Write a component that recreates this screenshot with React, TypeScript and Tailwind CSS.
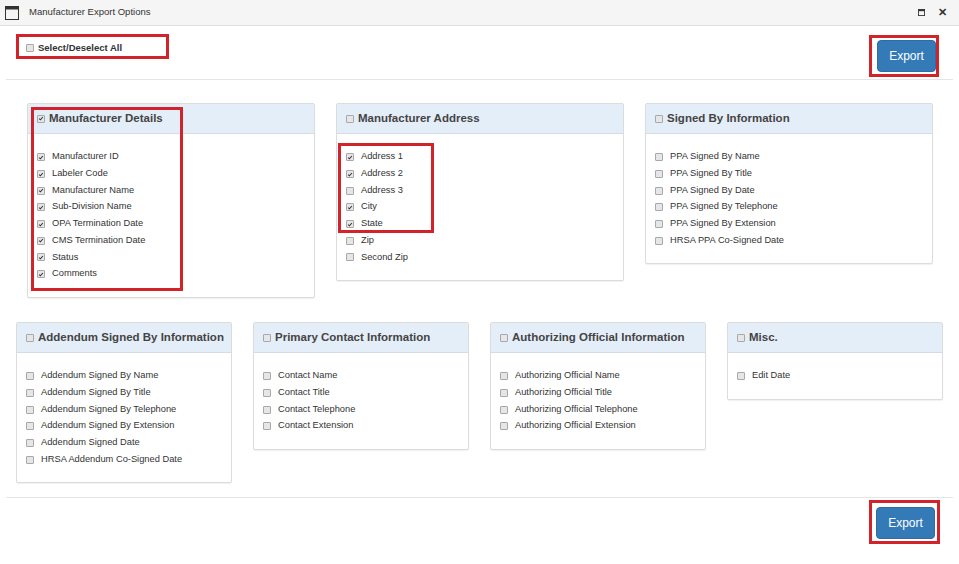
import React from 'react'

type Group = { title: string; checked?: boolean; items: [string, boolean][] }

const row1: Group[] = [
  {
    title: 'Manufacturer Details',
    checked: true,
    items: [
      ['Manufacturer ID', true], ['Labeler Code', true], ['Manufacturer Name', true],
      ['Sub-Division Name', true], ['OPA Termination Date', true], ['CMS Termination Date', true],
      ['Status', true], ['Comments', true],
    ],
  },
  {
    title: 'Manufacturer Address',
    items: [
      ['Address 1', true], ['Address 2', true], ['Address 3', false], ['City', true],
      ['State', true], ['Zip', false], ['Second Zip', false],
    ],
  },
  {
    title: 'Signed By Information',
    items: [
      ['PPA Signed By Name', false], ['PPA Signed By Title', false], ['PPA Signed By Date', false],
      ['PPA Signed By Telephone', false], ['PPA Signed By Extension', false],
      ['HRSA PPA Co-Signed Date', false],
    ],
  },
]

const row2: Group[] = [
  {
    title: 'Addendum Signed By Information',
    items: [
      ['Addendum Signed By Name', false], ['Addendum Signed By Title', false],
      ['Addendum Signed By Telephone', false], ['Addendum Signed By Extension', false],
      ['Addendum Signed Date', false], ['HRSA Addendum Co-Signed Date', false],
    ],
  },
  {
    title: 'Primary Contact Information',
    items: [
      ['Contact Name', false], ['Contact Title', false], ['Contact Telephone', false],
      ['Contact Extension', false],
    ],
  },
  {
    title: 'Authorizing Official Information',
    items: [
      ['Authorizing Official Name', false], ['Authorizing Official Title', false],
      ['Authorizing Official Telephone', false], ['Authorizing Official Extension', false],
    ],
  },
  { title: 'Misc.', items: [['Edit Date', false]] },
]

function Box({ on }: { on: boolean }) {
  return (
    <span className="inline-flex h-[8px] w-[8px] shrink-0 items-center justify-center rounded-[1px] border border-[#a8a8a8] bg-[#e6e6e6]">
      {on && (
        <svg viewBox="0 0 8 8" className="h-[7px] w-[7px]">
          <path d="M1.5 4.2 L3.2 5.8 L6.5 2" stroke="#333" strokeWidth="1.4" fill="none" />
        </svg>
      )}
    </span>
  )
}

function Panel({ g, w, h }: { g: Group; w: string; h: string }) {
  return (
    <div className={`${w} ${h} rounded-[2px] border border-[#dcdcdc] bg-white shadow-[0_1px_1px_rgba(0,0,0,0.06)]`}>
      <div className="flex h-[30px] items-center gap-[4px] border-b border-[#d3dce6] bg-[#e4eef9] px-[9px]">
        <Box on={!!g.checked} />
        <span className="whitespace-nowrap text-[11.5px] font-bold text-[#444]">{g.title}</span>
      </div>
      <div className="flex flex-col gap-[4px] px-[9px] pt-[17px]">
        {g.items.map(([t, on]) => (
          <div key={t} className="flex h-[12.7px] items-center gap-[7px]">
            <Box on={on} />
            <span className="whitespace-nowrap text-[9.3px] text-[#333]">{t}</span>
          </div>
        ))}
      </div>
    </div>
  )
}

function ExportBtn() {
  return (
    <button className="h-[32px] w-[59px] rounded-[4px] border border-[#2e6da4] bg-[#337ab7] text-[12px] text-white">
      Export
    </button>
  )
}

export default function App() {
  return (
    <div className="relative h-[564px] w-[959px] bg-white font-[family-name:Liberation_Sans,Arial,sans-serif]">
      {/* title bar */}
      <div className="flex h-[26px] items-center border-b border-[#dedede] bg-[#f5f5f5] px-[5px]">
        <svg viewBox="0 0 14 14" className="h-[14px] w-[14px]">
          <rect x="0.5" y="0.5" width="13" height="13" fill="none" stroke="#333" />
          <rect x="0.5" y="0.5" width="13" height="3" fill="#333" />
        </svg>
        <span className="ml-[10px] text-[9.5px] text-[#333]">Manufacturer Export Options</span>
        <div className="ml-auto flex items-center gap-[13px] pr-[7px]">
          <svg viewBox="0 0 8 8" className="h-[7px] w-[7px]">
            <rect x="0.5" y="0.5" width="7" height="7" fill="none" stroke="#333" />
            <rect x="0.5" y="0.5" width="7" height="2" fill="#333" />
          </svg>
          <span className="text-[11px] font-bold text-[#333]">✕</span>
        </div>
      </div>

      {/* top bar */}
      <div className="mx-[6px] flex h-[54px] items-start justify-between border-b border-[#e5e5e5] pt-[13px]">
        <div className="ml-[20px] flex items-center gap-[4px] pt-[2px]">
          <Box on={false} />
          <span className="text-[9.5px] font-bold text-[#333]">Select/Deselect All</span>
        </div>
        <div className="mr-[17px] pt-[1px]">
          <ExportBtn />
        </div>
      </div>

      <div className="flex gap-[21px] pl-[27px] pt-[23px]">
        {row1.map((g, i) => (
          <Panel key={g.title} g={g} w="w-[288px]" h={i === 2 ? 'h-[161px]' : i === 1 ? 'h-[178px]' : 'h-[195px]'} />
        ))}
      </div>

      <div className="flex items-start gap-[21px] pl-[16px] pt-[24px]">
        {row2.map((g, i) => (
          <Panel key={g.title} g={g} w="w-[216px]" h={i === 0 ? 'h-[161px]' : i === 3 ? 'h-[78px]' : 'h-[128px]'} />
        ))}
      </div>

      <div className="mx-[6px] mt-[14px] flex justify-end border-t border-[#e5e5e5] pt-[9px]">
        <div className="mr-[18px]">
          <ExportBtn />
        </div>
      </div>

      {/* annotation boxes */}
      <div className="absolute left-[16px] top-[34px] h-[25px] w-[153px] border-[3px] border-[#d2232a]" />
      <div className="absolute left-[869px] top-[35px] h-[42px] w-[70px] border-[3px] border-[#d2232a]" />
      <div className="absolute left-[31px] top-[107px] h-[184px] w-[152px] border-[3px] border-[#d2232a]" />
      <div className="absolute left-[338px] top-[143px] h-[90px] w-[96px] border-[3px] border-[#d2232a]" />
      <div className="absolute left-[869px] top-[500px] h-[44px] w-[71px] border-[3px] border-[#d2232a]" />
    </div>
  )
}
